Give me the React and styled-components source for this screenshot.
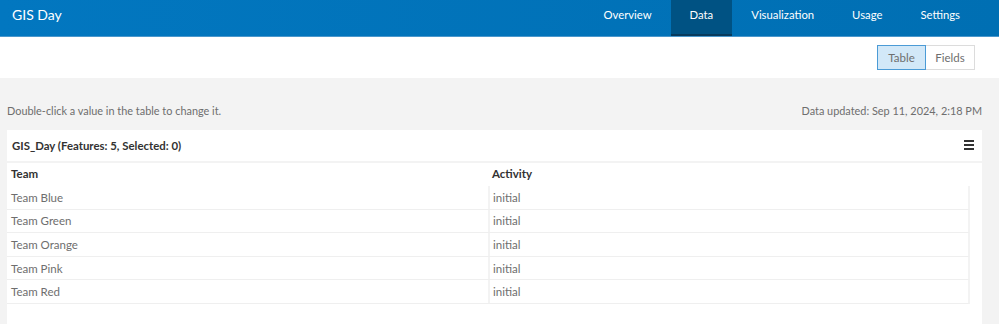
import styled, { createGlobalStyle } from 'styled-components';

const GlobalStyle = createGlobalStyle`
    html, body {
        margin: 0;
        padding: 0;
        background: #f3f3f3;
        font-family: Lato, "Open Sans", sans-serif;
    }
`;

const Page = styled.div`
    width: 999px;
    height: 324px;
    overflow: hidden;
    background: #f3f3f3;
`;

const Header = styled.header`
    height: 37px;
    background: linear-gradient(90deg, #0277c0, #006fb3);
    border-bottom: 1px solid #4a97cc;
    display: flex;
    align-items: stretch;
    justify-content: space-between;
    padding-left: 12px;
    box-sizing: border-box;
`;

const AppTitle = styled.div`
    color: #fff;
    font-size: 14px;
    line-height: 29px;
`;

const Nav = styled.nav`
    display: flex;
    align-items: stretch;
    padding-right: 20px;
`;

const NavItem = styled.div`
    color: #fff;
    font-size: 11.3px;
    display: flex;
    align-items: center;
    padding: 0 19px 5px;
    background: ${p => (p.$active ? '#005283' : 'transparent')};
    border-bottom: ${p => (p.$active ? '2px solid #073a5c' : '2px solid transparent')};
    box-sizing: border-box;
`;

const Toolbar = styled.div`
    height: 41px;
    background: #fff;
    display: flex;
    align-items: center;
    justify-content: flex-end;
    padding-right: 24px;
`;

const Segment = styled.div`
    display: flex;
`;

const SegButton = styled.button`
    font-family: inherit;
    font-size: 11.5px;
    color: #6e6e6e;
    height: 25px;
    width: ${p => p.$w}px;
    padding: 0;
    background: ${p => (p.$active ? '#d2e8f8' : '#fff')};
    border: 1px solid ${p => (p.$active ? '#4b9bd6' : '#dcdcdc')};
    margin-left: ${p => (p.$active ? 0 : -1)}px;
    position: relative;
    z-index: ${p => (p.$active ? 1 : 0)};
    cursor: pointer;
`;

const Info = styled.div`
    display: flex;
    justify-content: space-between;
    padding: 25px 17px 0 7px;
    height: 27px;
    font-size: 10.9px;
    color: #6e6e6e;
    line-height: 16px;
`;

const Card = styled.section`
    margin: 0 17px 0 7px;
    background: #fff;
    height: 200px;
`;

const CardHead = styled.div`
    height: 31px;
    display: flex;
    align-items: center;
    justify-content: space-between;
    padding: 0 8px 0 5px;
    font-size: 11.4px;
    font-weight: 700;
    color: #323232;
    border-bottom: 2px solid #f3f3f3;
`;

const Menu = styled.div`
    display: flex;
    flex-direction: column;
    gap: 2px;
    margin-top: -1px;
    span {
        display: block;
        width: 10px;
        height: 2px;
        background: #323232;
    }
`;

const Table = styled.div`
    width: 963px;
`;

const Row = styled.div`
    display: grid;
    grid-template-columns: 481px 1fr;
    height: ${p => (p.$head ? 23 : 23.6)}px;
    align-items: center;
    padding-bottom: ${p => (p.$head ? 3 : 0)}px;
    border-bottom: ${p => (p.$head ? 'none' : '1px solid #efefef')};
    border-right: ${p => (p.$head ? 'none' : '2px solid #f3f3f3')};
    box-sizing: border-box;
    font-size: 11.5px;
    color: ${p => (p.$head ? '#323232' : '#6e6e6e')};
    font-weight: ${p => (p.$head ? 700 : 400)};
`;

const Cell = styled.div`
    padding-left: ${p => (p.$divide ? 3 : 4)}px;
    height: 100%;
    display: flex;
    align-items: center;
    border-left: ${p => (p.$divide ? '2px solid #f3f3f3' : 'none')};
`;

const rows = ['Team Blue', 'Team Green', 'Team Orange', 'Team Pink', 'Team Red'];

export default function App() {
    return (
        <Page>
            <GlobalStyle />
            <Header>
                <AppTitle>GIS Day</AppTitle>
                <Nav>
                    <NavItem>Overview</NavItem>
                    <NavItem $active>Data</NavItem>
                    <NavItem>Visualization</NavItem>
                    <NavItem>Usage</NavItem>
                    <NavItem>Settings</NavItem>
                </Nav>
            </Header>
            <Toolbar>
                <Segment>
                    <SegButton $active $w={49}>Table</SegButton>
                    <SegButton $w={50}>Fields</SegButton>
                </Segment>
            </Toolbar>
            <Info>
                <span>Double-click a value in the table to change it.</span>
                <span>Data updated: Sep 11, 2024, 2:18 PM</span>
            </Info>
            <Card>
                <CardHead>
                    <span>GIS_Day (Features: 5, Selected: 0)</span>
                    <Menu>
                        <span />
                        <span />
                        <span />
                    </Menu>
                </CardHead>
                <Table>
                    <Row $head>
                        <Cell>Team</Cell>
                        <Cell>Activity</Cell>
                    </Row>
                    {rows.map(name => (
                        <Row key={name}>
                            <Cell>{name}</Cell>
                            <Cell $divide>initial</Cell>
                        </Row>
                    ))}
                </Table>
            </Card>
        </Page>
    );
}
